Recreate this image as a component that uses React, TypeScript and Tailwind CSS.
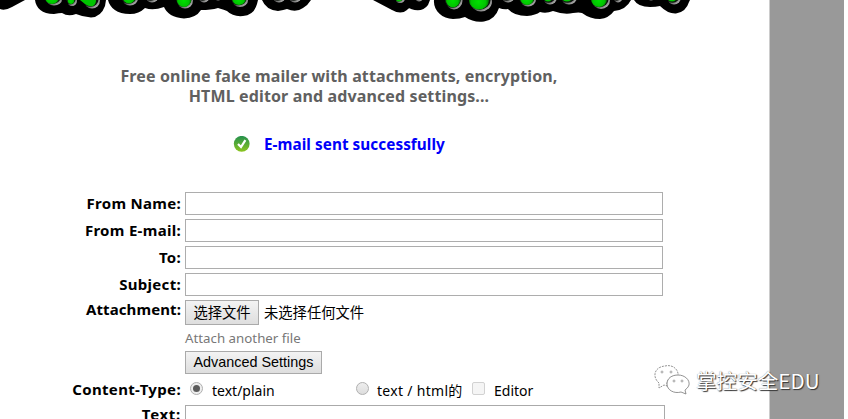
import React from 'react';

const BOLD = "font-['Noto_Sans','Noto_Sans_CJK_SC',sans-serif] font-bold";
const BODY = "font-['Noto_Sans','Noto_Sans_CJK_SC',sans-serif]";

type Blob = [number, number, number, number];

const outline: string[] = [
  'M0 0V9Q5 11 12 7L25 0Z',
  'M35 0C36 8 42 14 54 14Q59 13 62 13Q68 17 76 14Q83 17 91 17.5Q101 17 105 6L106 0Z',
  'M108 0C110 8 117 14 130 14Q139 14 145 8Q153 11 164 7Q168 17 184 18.5Q196 18 201 10Q211 10 218 8Q225 10 227 11Q233 17 243 16Q254 15 257 4L258 0Z',
  'M262 0Q266 10 278 11Q284 10 287 9Q296 13 303 8Q308 5 311 0Z',
  'M373 0L392 10Q401 15 407 10Q409 7 411 9Q422 13 428 5L430 0Z',
  'M434 0C433 10 442 19 453 19Q460 19 465 17Q474 23 484 21.5Q495 20 499 8Q504 10 508 9Q514 16 527 16Q536 15 540 12Q546 14 553 11Q564 15 573 13Q579 12 582 13Q590 19 600 19Q609 18 614 11Q626 10 631 0Z',
  'M634 0Q638 7 650 7Q656 7 660 6Q668 14 676 13.5Q686 12 689 2L690 0Z',
];

const letters: Blob[] = [
  [53, -2, 8, 6], [71, -1, 5, 5.5], [91, -1, 8, 8], [129, -3, 8, 7], [151, -6, 7, 7],
  [184, -1, 8, 8], [203, -6, 6, 7], [217, -7, 6, 6], [239, -1, 8, 6.5], [278, -6, 7, 7], [294, -6, 7, 7],
  [399, -3, 5, 4.5], [418, -6, 5, 6], [453, -1, 8.5, 9], [480, 0, 11, 10], [507, -6, 7, 7],
  [527, -2, 8, 7], [549, -4, 7, 7], [568, -4, 8, 7], [600, -1, 9, 8.5], [617, -6, 5, 7],
  [650, -7, 6, 6], [673, -4, 7, 7],
];

const greens: Blob[] = [
  [52, -2, 7, 6], [71, 0, 3.5, 4], [129, -3, 6.5, 6.5], [184, -1, 7.5, 8],
  [239, -1, 7, 6], [399, -3, 4, 4.5], [453, -1, 7.5, 8.5], [479, 0, 10, 9.5],
  [527, -2, 7, 7], [548, -4, 5, 5.5], [567, -4, 6, 5.5], [599, -1, 8, 8], [672, -4, 5.5, 5.5],
];

function Logo() {
  return (
    <svg className="block h-6 w-[769px]" viewBox="0 0 769 24">
      <defs>
        <radialGradient id="green" cx=".48" cy=".6" r=".6">
          <stop offset="0" stopColor="#00e000" />
          <stop offset=".6" stopColor="#00c400" />
          <stop offset="1" stopColor="#004800" />
        </radialGradient>
        <linearGradient id="rim" x1="0" y1="0" x2="1" y2="1">
          <stop offset=".4" stopColor="#0c0c0c" />
          <stop offset=".65" stopColor="#777" />
          <stop offset=".85" stopColor="#aaa" />
          <stop offset="1" stopColor="#333" />
        </linearGradient>
        <filter id="soft" x="-20%" y="-20%" width="140%" height="140%">
          <feGaussianBlur stdDeviation=".65" />
        </filter>
        <filter id="edge" x="-10%" y="-20%" width="120%" height="140%">
          <feGaussianBlur stdDeviation=".5" />
        </filter>
      </defs>
      {outline.map((d) => <path key={d} d={d} fill="#000" />)}
      <g filter="url(#soft)">
        {letters.map(([x, y, rx, ry]) => <ellipse key={x} cx={x + 1} cy={y + 1.5} rx={rx} ry={ry} fill="url(#rim)" />)}
        {letters.map(([x, y, rx, ry]) => <ellipse key={x} cx={x - 0.2} cy={y} rx={rx - 0.3} ry={ry - 0.3} fill="#0c140c" />)}
      </g>
      <g filter="url(#edge)">
        {greens.map(([x, y, rx, ry]) => <ellipse key={x} cx={x} cy={y} rx={rx} ry={ry} fill="url(#green)" />)}
        <path d="M80 0L96 0Q96 4 93 6Q89 7 85 4Z" fill="#00c400" />
      </g>
    </svg>
  );
}

function Field({ label }: { label: string }) {
  return (
    <div className="flex h-[27px] items-start">
      <label className={`${BOLD} w-[181px] shrink-0 text-right text-[15px] leading-[23px] tracking-[.3px] text-black`}>{label}</label>
      <input aria-label={label} className="ml-[4px] h-[23px] w-[478px] border border-[#adadad] bg-white" />
    </div>
  );
}

function Watermark() {
  return (
    <div className="absolute left-[654px] top-[363px] flex h-[34px] items-center">
      <svg className="h-[34px] w-[36px] shrink-0" viewBox="0 0 36 34" fill="#fff" stroke="#777" strokeWidth=".8">
        <path d="M5 20C-2 14 0 4 11 3C19 1 25 7 24 13C18 12 12 16 13 23L10 22L5 25Z" strokeDasharray="2 1" />
        <path d="M31 27L32 31L27 29C20 31 13 27 13 21C13 15 18 12 24 12C31 12 36 17 35 22C34 25 32 26 31 27Z" />
        <g strokeWidth=".6"><circle cx="8" cy="9" r="1" /><circle cx="17" cy="9" r="1" />
        <circle cx="20" cy="18" r="1" /><circle cx="28" cy="18" r="1" /></g>
      </svg>
      <span className="ml-[6px] whitespace-nowrap font-['Noto_Sans_CJK_SC',sans-serif] text-[20.6px] leading-[30px] text-white [text-shadow:1px_1px_1px_#333,0_0_1px_#777]">掌控安全EDU</span>
    </div>
  );
}

export default function App() {
  return (
    <div className="relative flex h-[419px] w-[848px] overflow-hidden bg-white">
      <main className="h-full w-[769px] shrink-0">
        <Logo />
        <div className={`${BOLD} ml-[79px] mt-[42px] w-[520px] whitespace-nowrap text-center text-[16px] leading-[20px] tracking-[.13px] text-[#606060]`}>
          <p>Free online fake mailer with attachments, encryption,</p>
          <p>HTML editor and advanced settings...</p>
        </div>
        <div className="mt-[28px] flex h-5 items-center pl-[233px]">
          <svg className="h-[17px] w-[17px]" viewBox="0 0 17 17">
            <defs>
              <linearGradient id="ok" x1="0" y1="0" x2="0" y2="1">
                <stop offset="0" stopColor="#23904d" /><stop offset="1" stopColor="#8cc51f" />
              </linearGradient>
            </defs>
            <circle cx="8.7" cy="7.8" r="7.9" fill="url(#ok)" />
            <path d="M5 8L8 11L12.4 4.2" fill="none" stroke="#fff" strokeWidth="2.2" />
          </svg>
          <p className={`${BOLD} ml-[14px] whitespace-nowrap text-[15.3px] leading-5 tracking-[.05px] text-[#0000fa]`}>E-mail sent successfully</p>
        </div>
        <form className="mt-[38px]">
          <Field label="From Name:" />
          <Field label="From E-mail:" />
          <Field label="To:" />
          <Field label="Subject:" />
          <div className="flex h-[30px]">
            <span className={`${BOLD} w-[181px] shrink-0 text-right text-[15px] leading-[18px] tracking-[.1px]`}>Attachment:</span>
            <button type="button" className="ml-[4px] h-[25px] w-[74px] border border-[#aaa] bg-linear-to-b from-[#f3f3f3] to-[#dedede] font-['Noto_Sans_CJK_SC',sans-serif] text-[14.3px] leading-[21px] text-black"><span className="block h-[23px] leading-[21px]">选择文件</span></button>
            <span className="ml-[5px] font-['Noto_Sans_CJK_SC',sans-serif] text-[14.3px] leading-[23px]">未选择任何文件</span>
          </div>
          <p className={`${BODY} h-[21px] pl-[185px] text-[13.3px] leading-[17px] text-[#777]`}>Attach another file</p>
          <div className="flex h-[29px] pl-[185px]">
            <button type="button" className="h-[23px] w-[137px] border border-[#aaa] bg-linear-to-b from-[#f3f3f3] to-[#dedede] font-['Liberation_Sans',Arial,sans-serif] text-[14.4px] text-black"><span className="block h-[21px] leading-[20px]">Advanced Settings</span></button>
          </div>
          <div className="flex h-[25px] items-start">
            <span className={`${BOLD} w-[181px] shrink-0 text-right text-[15px] leading-[19px] tracking-[.35px]`}>Content-Type:</span>
            <span className="ml-[9px] mt-[2px] flex h-[13px] w-[13px] items-center justify-center rounded-full border border-[#b0b0b0] bg-[#eee]"><i className="h-[7px] w-[7px] rounded-full bg-[#5b5b5b]" /></span>
            <span className={`${BODY} ml-[9px] w-[144px] text-[14px] leading-[21px]`}>text/plain</span>
            <span className="mt-[2px] h-[13px] w-[13px] shrink-0 rounded-full border border-[#b0b0b0] bg-linear-to-b from-[#eee] to-[#ddd]" />
            <span className={`${BODY} ml-[8px] w-[95px] whitespace-nowrap text-[14px] leading-[21px] tracking-[.3px]`}>text / html的</span>
            <span className="mt-[2px] h-[13px] w-[13px] shrink-0 rounded-[2px] border border-[#d2d2d2] bg-[#f5f5f5]" />
            <span className={`${BODY} ml-[9px] text-[14px] leading-[21px]`}>Editor</span>
          </div>
          <div className="flex h-[30px]">
            <span className={`${BOLD} w-[181px] shrink-0 text-right text-[15px] leading-[18px] tracking-[.7px]`}>Text:</span>
            <div className="ml-[4px] h-[30px] w-[480px] border border-[#aaa] bg-white" />
          </div>
        </form>
      </main>
      <aside className="h-full w-[75px] shrink-0 border-l border-[#ccc] bg-[#999]" />
      <Watermark />
    </div>
  );
}
